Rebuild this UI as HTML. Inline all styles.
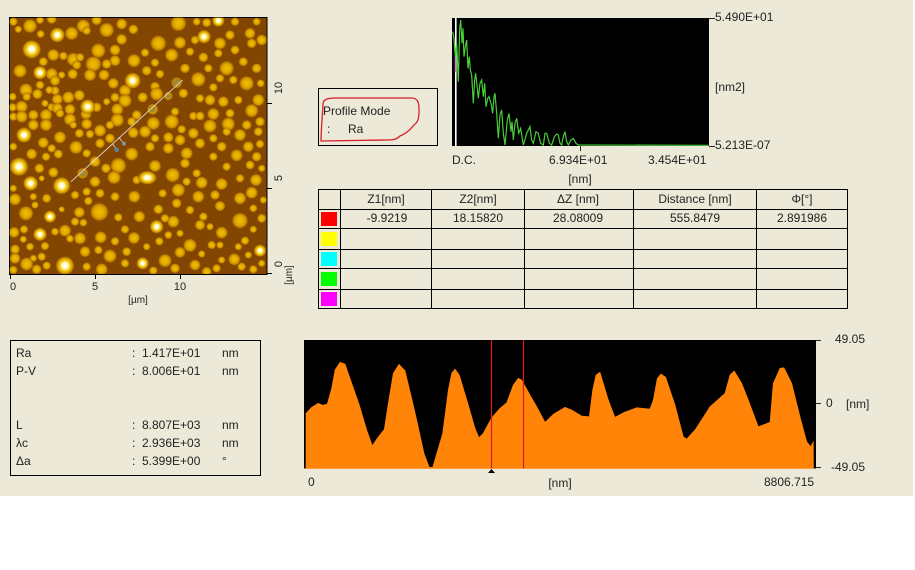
<!DOCTYPE html>
<html><head><meta charset="utf-8"><style>
html,body{margin:0;padding:0;background:#fff}
#p{position:relative;width:915px;height:570px;overflow:hidden;background:#fff;font:12px "Liberation Sans",sans-serif;color:#222}
#bg{position:absolute;left:0;top:0;width:913px;height:496px;background:#ECE9D8}
svg{position:absolute;left:0;top:0}
.t{position:absolute;white-space:nowrap;line-height:14px;height:14px}
.c{transform:translateX(-50%)}
.s{font-size:11px}
.l{position:absolute;background:#000}
.q{position:absolute;left:321px;width:16px;height:14px}
</style></head><body><div id="p"><div id="bg"></div>
<svg width="915" height="570" viewBox="0 0 915 570">
<defs>
<radialGradient id="y"><stop offset="0" stop-color="#f0c000"/><stop offset=".5" stop-color="#e2aa00"/><stop offset=".78" stop-color="#c08200"/><stop offset="1" stop-color="#824600" stop-opacity="0"/></radialGradient>
<radialGradient id="w"><stop offset="0" stop-color="#fff"/><stop offset=".28" stop-color="#fffad0"/><stop offset=".52" stop-color="#f4cc10"/><stop offset=".8" stop-color="#c88a00"/><stop offset="1" stop-color="#824600" stop-opacity="0"/></radialGradient>
<clipPath id="cp"><rect x="29" y="53" width="771" height="769"/></clipPath>
</defs>
<rect x="9.5" y="17.5" width="257.5" height="257" fill="#824600" stroke="#000"/>
<g transform="scale(.33333)" clip-path="url(#cp)">
<g fill="url(#y)">
<circle cx="40" cy="65" r="14"/><circle cx="90" cy="78" r="23"/><circle cx="120" cy="60" r="13"/><circle cx="155" cy="57" r="16"/><circle cx="215" cy="100" r="22"/><circle cx="250" cy="78" r="22"/><circle cx="290" cy="60" r="17"/><circle cx="320" cy="90" r="24"/><circle cx="365" cy="72" r="18"/><circle cx="400" cy="88" r="16"/><circle cx="535" cy="70" r="26"/><circle cx="590" cy="65" r="13"/><circle cx="620" cy="68" r="15"/><circle cx="705" cy="65" r="14"/><circle cx="770" cy="65" r="13"/>
<circle cx="55" cy="88" r="12"/><circle cx="122" cy="102" r="13"/><circle cx="260" cy="92" r="14"/><circle cx="365" cy="118" r="18"/><circle cx="475" cy="130" r="26"/><circle cx="540" cy="128" r="20"/><circle cx="585" cy="120" r="14"/><circle cx="660" cy="130" r="20"/><circle cx="690" cy="105" r="16"/><circle cx="750" cy="100" r="18"/><circle cx="785" cy="120" r="18"/>
<circle cx="90" cy="160" r="10"/><circle cx="130" cy="185" r="15"/><circle cx="160" cy="165" r="20"/><circle cx="220" cy="178" r="22"/><circle cx="295" cy="152" r="24"/><circle cx="345" cy="150" r="18"/><circle cx="435" cy="158" r="14"/><circle cx="515" cy="165" r="22"/><circle cx="570" cy="155" r="14"/><circle cx="610" cy="172" r="16"/><circle cx="655" cy="160" r="14"/><circle cx="705" cy="150" r="15"/><circle cx="755" cy="130" r="16"/>
<circle cx="60" cy="213" r="22"/><circle cx="155" cy="222" r="20"/><circle cx="190" cy="168" r="14"/><circle cx="240" cy="172" r="14"/><circle cx="280" cy="192" r="26"/><circle cx="345" cy="182" r="18"/><circle cx="402" cy="182" r="22"/><circle cx="465" cy="188" r="14"/><circle cx="555" cy="205" r="16"/><circle cx="625" cy="205" r="14"/><circle cx="680" cy="205" r="24"/><circle cx="730" cy="185" r="15"/><circle cx="770" cy="205" r="16"/>
<circle cx="230" cy="195" r="15"/><circle cx="320" cy="192" r="16"/><circle cx="270" cy="225" r="20"/><circle cx="312" cy="225" r="18"/><circle cx="185" cy="225" r="12"/><circle cx="165" cy="242" r="17"/><circle cx="218" cy="222" r="17"/><circle cx="440" cy="212" r="16"/><circle cx="480" cy="222" r="14"/><circle cx="530" cy="248" r="18"/><circle cx="595" cy="238" r="24"/><circle cx="660" cy="235" r="14"/><circle cx="740" cy="250" r="24"/><circle cx="700" cy="240" r="14"/><circle cx="782" cy="250" r="13"/>
<circle cx="78" cy="270" r="22"/><circle cx="120" cy="255" r="14"/><circle cx="165" cy="272" r="15"/><circle cx="238" cy="286" r="18"/><circle cx="340" cy="250" r="18"/><circle cx="375" cy="272" r="20"/><circle cx="465" cy="260" r="16"/><circle cx="550" cy="280" r="16"/><circle cx="640" cy="262" r="14"/><circle cx="775" cy="300" r="20"/>
<circle cx="38" cy="290" r="13"/><circle cx="80" cy="290" r="14"/><circle cx="112" cy="282" r="17"/><circle cx="148" cy="270" r="13"/><circle cx="172" cy="298" r="18"/><circle cx="205" cy="292" r="20"/><circle cx="290" cy="322" r="16"/><circle cx="345" cy="292" r="15"/><circle cx="320" cy="305" r="12"/><circle cx="375" cy="302" r="22"/><circle cx="428" cy="292" r="17"/><circle cx="470" cy="282" r="22"/><circle cx="505" cy="288" r="14"/><circle cx="600" cy="295" r="14"/><circle cx="630" cy="300" r="18"/><circle cx="670" cy="305" r="18"/><circle cx="715" cy="300" r="14"/>
<circle cx="38" cy="322" r="14"/><circle cx="65" cy="320" r="20"/><circle cx="135" cy="310" r="12"/><circle cx="155" cy="322" r="14"/><circle cx="172" cy="325" r="18"/><circle cx="210" cy="328" r="18"/><circle cx="352" cy="328" r="20"/><circle cx="410" cy="345" r="16"/><circle cx="458" cy="328" r="18"/><circle cx="525" cy="335" r="14"/><circle cx="580" cy="348" r="14"/><circle cx="640" cy="342" r="20"/><circle cx="690" cy="340" r="15"/><circle cx="755" cy="332" r="22"/>
<circle cx="40" cy="350" r="14"/><circle cx="65" cy="350" r="20"/><circle cx="100" cy="345" r="17"/><circle cx="138" cy="345" r="20"/><circle cx="180" cy="340" r="14"/><circle cx="210" cy="358" r="20"/><circle cx="258" cy="342" r="18"/><circle cx="352" cy="360" r="22"/><circle cx="395" cy="365" r="15"/><circle cx="460" cy="370" r="22"/><circle cx="515" cy="365" r="24"/><circle cx="600" cy="348" r="15"/><circle cx="630" cy="378" r="22"/><circle cx="685" cy="372" r="22"/><circle cx="780" cy="365" r="16"/><circle cx="740" cy="375" r="16"/>
<circle cx="100" cy="375" r="18"/><circle cx="138" cy="375" r="20"/><circle cx="220" cy="375" r="12"/><circle cx="260" cy="372" r="18"/><circle cx="300" cy="392" r="20"/><circle cx="330" cy="375" r="14"/><circle cx="400" cy="398" r="18"/><circle cx="435" cy="395" r="20"/><circle cx="545" cy="388" r="14"/><circle cx="580" cy="400" r="18"/><circle cx="680" cy="395" r="14"/><circle cx="720" cy="405" r="20"/><circle cx="775" cy="395" r="15"/>
<circle cx="130" cy="428" r="18"/><circle cx="180" cy="412" r="20"/><circle cx="238" cy="400" r="15"/><circle cx="270" cy="402" r="14"/><circle cx="228" cy="442" r="22"/><circle cx="155" cy="445" r="14"/><circle cx="300" cy="430" r="16"/><circle cx="330" cy="415" r="16"/><circle cx="465" cy="415" r="14"/><circle cx="505" cy="412" r="17"/><circle cx="540" cy="420" r="18"/><circle cx="600" cy="430" r="17"/><circle cx="640" cy="415" r="14"/><circle cx="665" cy="440" r="16"/><circle cx="745" cy="440" r="18"/><circle cx="780" cy="432" r="14"/>
<circle cx="40" cy="440" r="13"/><circle cx="95" cy="462" r="18"/><circle cx="138" cy="470" r="14"/><circle cx="175" cy="462" r="15"/><circle cx="260" cy="460" r="14"/><circle cx="395" cy="462" r="22"/><circle cx="450" cy="440" r="16"/><circle cx="505" cy="445" r="18"/><circle cx="560" cy="460" r="20"/><circle cx="640" cy="470" r="14"/><circle cx="710" cy="466" r="20"/><circle cx="770" cy="470" r="16"/>
<circle cx="118" cy="505" r="16"/><circle cx="160" cy="517" r="17"/><circle cx="285" cy="485" r="18"/><circle cx="318" cy="505" r="16"/><circle cx="355" cy="497" r="26"/><circle cx="465" cy="498" r="20"/><circle cx="555" cy="490" r="16"/><circle cx="590" cy="520" r="14"/><circle cx="750" cy="495" r="15"/><circle cx="680" cy="500" r="14"/><circle cx="785" cy="505" r="12"/>
<circle cx="40" cy="565" r="12"/><circle cx="125" cy="535" r="10"/><circle cx="248" cy="520" r="18"/><circle cx="342" cy="532" r="22"/><circle cx="285" cy="545" r="18"/><circle cx="518" cy="525" r="24"/><circle cx="560" cy="545" r="14"/><circle cx="605" cy="548" r="20"/><circle cx="665" cy="552" r="20"/><circle cx="720" cy="535" r="14"/><circle cx="768" cy="540" r="20"/><circle cx="410" cy="540" r="14"/>
<circle cx="45" cy="598" r="20"/><circle cx="100" cy="590" r="12"/><circle cx="140" cy="595" r="15"/><circle cx="225" cy="585" r="14"/><circle cx="260" cy="575" r="14"/><circle cx="265" cy="603" r="14"/><circle cx="300" cy="580" r="15"/><circle cx="345" cy="590" r="15"/><circle cx="403" cy="590" r="20"/><circle cx="488" cy="580" r="14"/><circle cx="535" cy="570" r="22"/><circle cx="595" cy="590" r="20"/><circle cx="645" cy="585" r="16"/><circle cx="720" cy="595" r="20"/><circle cx="755" cy="578" r="20"/><circle cx="790" cy="600" r="12"/>
<circle cx="78" cy="640" r="24"/><circle cx="105" cy="615" r="12"/><circle cx="185" cy="628" r="10"/><circle cx="238" cy="637" r="18"/><circle cx="298" cy="636" r="30"/><circle cx="355" cy="652" r="14"/><circle cx="418" cy="650" r="19"/><circle cx="475" cy="628" r="16"/><circle cx="530" cy="610" r="16"/><circle cx="570" cy="630" r="14"/><circle cx="660" cy="618" r="17"/><circle cx="610" cy="650" r="14"/><circle cx="720" cy="662" r="26"/><circle cx="785" cy="655" r="15"/><circle cx="760" cy="625" r="13"/>
<circle cx="42" cy="697" r="18"/><circle cx="72" cy="688" r="14"/><circle cx="195" cy="692" r="20"/><circle cx="225" cy="665" r="14"/><circle cx="250" cy="668" r="13"/><circle cx="165" cy="695" r="13"/><circle cx="302" cy="712" r="20"/><circle cx="375" cy="688" r="14"/><circle cx="402" cy="714" r="20"/><circle cx="520" cy="665" r="20"/><circle cx="495" cy="655" r="14"/><circle cx="540" cy="700" r="12"/><circle cx="600" cy="675" r="17"/><circle cx="665" cy="698" r="20"/><circle cx="630" cy="680" r="12"/><circle cx="760" cy="688" r="12"/>
<circle cx="90" cy="740" r="13"/><circle cx="70" cy="718" r="12"/><circle cx="135" cy="738" r="14"/><circle cx="210" cy="716" r="13"/><circle cx="240" cy="715" r="20"/><circle cx="255" cy="755" r="18"/><circle cx="345" cy="724" r="14"/><circle cx="440" cy="740" r="12"/><circle cx="478" cy="724" r="14"/><circle cx="505" cy="705" r="13"/><circle cx="570" cy="736" r="22"/><circle cx="635" cy="735" r="14"/><circle cx="660" cy="735" r="12"/><circle cx="735" cy="722" r="14"/><circle cx="715" cy="740" r="12"/>
<circle cx="45" cy="748" r="16"/><circle cx="45" cy="775" r="18"/><circle cx="100" cy="775" r="12"/><circle cx="125" cy="770" r="14"/><circle cx="80" cy="792" r="22"/><circle cx="330" cy="768" r="22"/><circle cx="295" cy="750" r="14"/><circle cx="380" cy="755" r="15"/><circle cx="495" cy="782" r="22"/><circle cx="540" cy="757" r="18"/><circle cx="605" cy="762" r="12"/><circle cx="703" cy="778" r="20"/><circle cx="745" cy="765" r="12"/><circle cx="665" cy="780" r="12"/>
<circle cx="40" cy="810" r="14"/><circle cx="110" cy="808" r="16"/><circle cx="140" cy="797" r="14"/><circle cx="260" cy="800" r="14"/><circle cx="305" cy="808" r="20"/><circle cx="375" cy="790" r="14"/><circle cx="460" cy="812" r="14"/><circle cx="525" cy="805" r="16"/><circle cx="585" cy="795" r="18"/><circle cx="620" cy="815" r="16"/><circle cx="650" cy="805" r="14"/><circle cx="725" cy="800" r="14"/><circle cx="760" cy="808" r="14"/><circle cx="785" cy="790" r="12"/>
</g>
<g fill="url(#w)">
<circle cx="95" cy="148" r="30"/><circle cx="172" cy="105" r="24"/><circle cx="398" cy="242" r="26"/><circle cx="263" cy="320" r="24"/><circle cx="72" cy="405" r="25"/><circle cx="57" cy="500" r="30"/><circle cx="185" cy="557" r="28"/><ellipse cx="442" cy="533" rx="30" ry="22"/><circle cx="120" cy="218" r="22"/><circle cx="92" cy="550" r="24"/><circle cx="150" cy="650" r="20"/><circle cx="120" cy="703" r="22"/><circle cx="195" cy="797" r="30"/><circle cx="428" cy="790" r="20"/><circle cx="470" cy="680" r="22"/><circle cx="780" cy="752" r="20"/><circle cx="655" cy="62" r="20"/><circle cx="612" cy="110" r="22"/>
</g>
<g fill="#8f7a3a" opacity=".75"><circle cx="248" cy="520" r="11"/><circle cx="457" cy="327" r="10"/><circle cx="505" cy="288" r="8"/><circle cx="530" cy="248" r="12"/><circle cx="410" cy="365" r="6"/></g>
<path d="M213,545L548,240" stroke="#e8e0e0" stroke-width="2.500" fill="none"/>
<path d="M338,432L350,449M358,414L372,431" stroke="#e8e8e8" stroke-width="2" fill="none"/>
<circle cx="350" cy="449" r="7" fill="#5f7f9a"/><circle cx="372" cy="431" r="6" fill="#7f93a8"/><circle cx="358" cy="414" r="3" fill="#c0c8d0"/>
</g>
<path d="M10.5,274v5M95.5,274v5M180.5,274v5M267,103.5h5M267,188.5h5M267,273.5h5" stroke="#000" fill="none"/>

<path d="M318.5,88.5h119v57h-119z" fill="none" stroke="#000"/>
<path d="M323,106C322,99 328,98 336,98L411,98C418,98 419,102 419,110C419,118 418,122 415,124C408,132 405,134 400,136C396,140 392,140 386,140L321,141C321,132 322,120 323,106Z" fill="none" stroke="#d82028" stroke-width="1.300"/>

<rect x="452" y="18" width="257" height="128" fill="#000"/>
<rect x="455" y="18" width="1.6" height="128" fill="#fff"/>
<rect x="454.6" y="56" width="1" height="16" fill="#a03090"/>
<g transform="translate(310,0) scale(.33333)"><polyline fill="none" stroke="#4ad038" stroke-width="3.500" points="428,95 432,115 436,170 440,130 445,245 449,90 452,60 456,130 459,85 462,170 466,140 470,120 474,205 478,170 481,210 485,225 490,310 494,240 497,220 502,265 505,295 510,250 515,240 520,290 524,250 528,320 533,295 537,290 543,310 548,340 552,290 555,280 560,340 565,415 570,345 575,330 580,400 585,435 592,360 597,340 603,395 606,365 610,420 615,370 620,355 626,400 632,385 640,435 650,400 660,380 665,420 670,430 678,395 685,400 692,430 700,435 705,400 710,400 718,430 725,435 733,410 740,402 745,405 750,430 755,435 760,410 765,395 770,425 775,435 783,420 790,415 798,430 805,435 1195,436"/></g>
<path d="M709,18.500h6M709,146.500h6M580.500,146v5" stroke="#222" fill="none"/>

<rect x="304" y="340" width="512" height="128.500" fill="#000"/>
<polygon fill="#ff8408" stroke="#ff8408" stroke-width=".6" stroke-linejoin="round" points="306,413.300 311.700,407.300 318.300,403.300 322.700,405.300 327.300,404 331.700,388.300 335,370 340,362.300 345,364 350,378.300 359.300,405 366.700,430 372.300,445.700 377.300,438.300 384.300,429.300 388.300,403.300 393.300,373.300 399,364.300 405,370.700 411.700,398.300 416.700,420 424,453.300 429.300,467.300 432.700,467.300 442.700,433.300 448.300,390 451.700,373.300 455,369 459.300,375 468.300,405 475,428.300 479,437.700 483.300,433.300 491.700,417.700 500,408.300 506.700,402.700 513.300,385 518.300,378.300 521.700,380 530,395 536.700,406.700 545,422.300 553.300,414.300 565,407.300 571.700,410 581.700,416 589.300,416.700 592.700,390 596,375 600,372.300 608.300,400 615,417.300 623.300,412.700 636.700,407.700 650,409 653.300,400 657.300,378.300 661,374 665.700,377.300 675,405 683.300,436.700 686.700,439 695,430 710,406.700 725,393.300 730,375 734.300,371 741.700,383.300 748.300,400 758.300,426.700 770,422.300 773.300,383.300 780,368.300 784,367.700 791.700,383.300 800,416.700 806.700,441.700 810.700,446.700 813.300,441.700 813.500,468.500 306,468.500"/>
<path d="M491.500,340V468.500M523.500,340V468.500" stroke="#d41c1c" stroke-width="1.200" fill="none"/>
<polygon points="491.500,469 488,473 495,473" fill="#000"/>
<path d="M816,340.500h5M816,403.500h5M816,467.500h5" stroke="#222" fill="none"/>

<path d="M318.500,189.500H847.500V308.500H318.500ZM318.500,209.500H847.500M318.500,228.500H847.500M318.500,249.500H847.500M318.500,268.500H847.500M318.500,289.500H847.500M340.500,189.500V308.500M431.500,189.500V308.500M524.500,189.500V308.500M633.500,189.500V308.500M756.500,189.500V308.500" fill="none" stroke="#000"/>
<rect x="10.500" y="340.500" width="250" height="135" fill="none" stroke="#000"/>
</svg>

<div class="t s c" style="left:13px;top:280px">0</div><div class="t s c" style="left:95px;top:280px">5</div><div class="t s c" style="left:180px;top:280px">10</div>
<div class="t s c" style="left:138px;top:294px;font-size:10px">[µm]</div>
<div class="t s c" style="left:279px;top:81px;transform:translateX(-50%) rotate(-90deg)">10</div>
<div class="t s c" style="left:279px;top:171px;transform:translateX(-50%) rotate(-90deg)">5</div>
<div class="t s c" style="left:279px;top:257px;transform:translateX(-50%) rotate(-90deg)">0</div>
<div class="t c" style="left:290px;top:268px;font-size:10px;transform:translateX(-50%) rotate(-90deg)">[µm]</div>

<div class="t" style="left:323px;top:104px">Profile Mode</div>
<div class="t" style="left:327px;top:122px">:</div><div class="t" style="left:348px;top:122px">Ra</div>

<div class="t" style="left:715px;top:10px">5.490E+01</div>
<div class="t" style="left:715px;top:80px">[nm2]</div>
<div class="t" style="left:715px;top:138px">5.213E-07</div>
<div class="t" style="left:452px;top:153px">D.C.</div>
<div class="t" style="left:549px;top:153px">6.934E+01</div>
<div class="t" style="left:648px;top:153px">3.454E+01</div>
<div class="t c" style="left:580px;top:172px">[nm]</div>

<div class="t c" style="left:386px;top:192px">Z1[nm]</div><div class="t c" style="left:478px;top:192px">Z2[nm]</div><div class="t c" style="left:578px;top:192px">ΔZ [nm]</div><div class="t c" style="left:695px;top:192px">Distance [nm]</div><div class="t c" style="left:802px;top:192px">Φ[°]</div>
<div class="t c" style="left:387px;top:211px">-9.9219</div><div class="t c" style="left:478px;top:211px">18.15820</div><div class="t c" style="left:578px;top:211px">28.08009</div><div class="t c" style="left:695px;top:211px">555.8479</div><div class="t c" style="left:802px;top:211px">2.891986</div>
<div class="q" style="top:212px;background:#ff0000"></div><div class="q" style="top:232px;background:#ffff00"></div><div class="q" style="top:252px;background:#00ffff"></div><div class="q" style="top:272px;background:#00ff00"></div><div class="q" style="top:292px;background:#ff00ff"></div>

<div class="t" style="left:16px;top:346px">Ra</div><div class="t" style="left:132px;top:346px">:</div><div class="t" style="left:142px;top:346px">1.417E+01</div><div class="t" style="left:222px;top:346px">nm</div>
<div class="t" style="left:16px;top:364px">P-V</div><div class="t" style="left:132px;top:364px">:</div><div class="t" style="left:142px;top:364px">8.006E+01</div><div class="t" style="left:222px;top:364px">nm</div>
<div class="t" style="left:16px;top:418px">L</div><div class="t" style="left:132px;top:418px">:</div><div class="t" style="left:142px;top:418px">8.807E+03</div><div class="t" style="left:222px;top:418px">nm</div>
<div class="t" style="left:16px;top:436px">λc</div><div class="t" style="left:132px;top:436px">:</div><div class="t" style="left:142px;top:436px">2.936E+03</div><div class="t" style="left:222px;top:436px">nm</div>
<div class="t" style="left:16px;top:454px">Δa</div><div class="t" style="left:132px;top:454px">:</div><div class="t" style="left:142px;top:454px">5.399E+00</div><div class="t" style="left:222px;top:454px">°</div>

<div class="t" style="left:835px;top:332px">49.05</div>
<div class="t" style="left:826px;top:396px">0</div>
<div class="t" style="left:846px;top:397px">[nm]</div>
<div class="t" style="left:831px;top:460px">-49.05</div>
<div class="t" style="left:308px;top:475px">0</div>
<div class="t c" style="left:560px;top:476px">[nm]</div>
<div class="t" style="left:764px;top:475px">8806.715</div>
</div></body></html>
